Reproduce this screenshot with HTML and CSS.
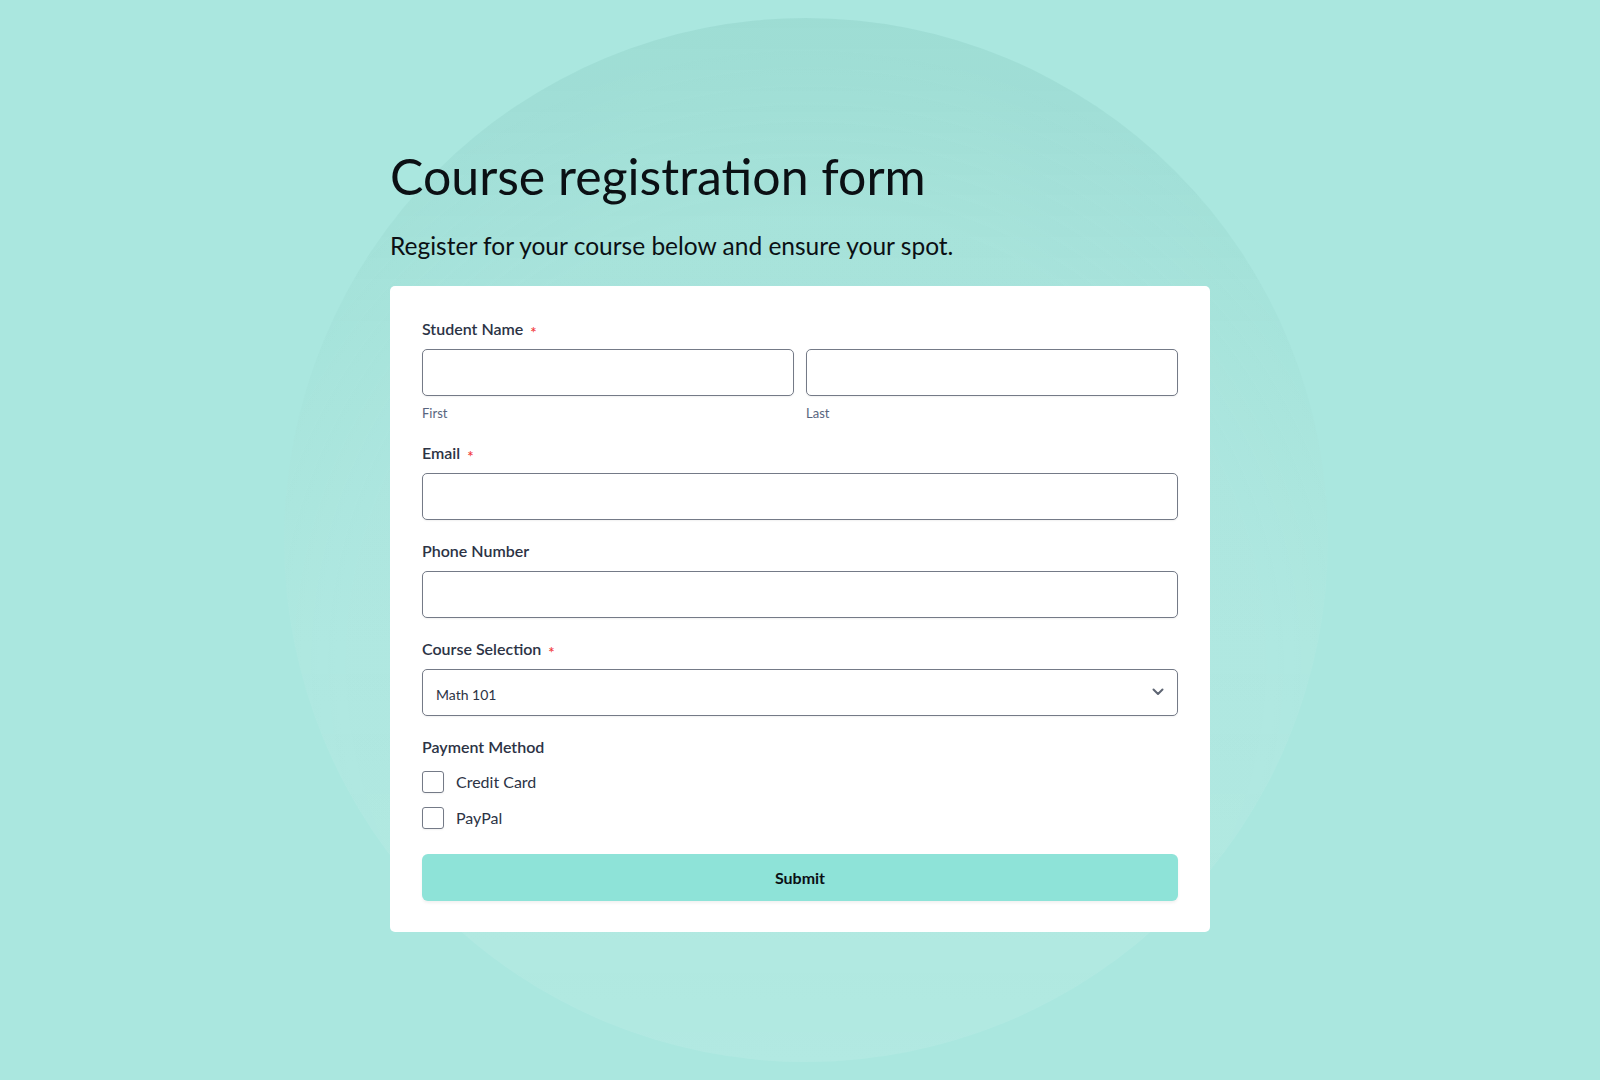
FILE: index.html
```html
<!DOCTYPE html>
<html lang="en">
<head>
<meta charset="utf-8">
<title>Course registration form</title>
<link rel="stylesheet" href="styles.css">
</head>
<body>
<div class="page">
  <div class="wrap">
    <h1 class="title">Course registration form</h1>
    <p class="subtitle">Register for your course below and ensure your spot.</p>
    <form class="card">
      <div class="field">
        <label class="label">Student Name <span class="req">*</span></label>
        <div class="name-row">
          <div class="name-col">
            <input class="input" type="text">
            <span class="sublabel">First</span>
          </div>
          <div class="name-col">
            <input class="input" type="text">
            <span class="sublabel">Last</span>
          </div>
        </div>
      </div>
      <div class="field">
        <label class="label">Email <span class="req">*</span></label>
        <input class="input" type="email">
      </div>
      <div class="field">
        <label class="label">Phone Number</label>
        <input class="input" type="tel">
      </div>
      <div class="field">
        <label class="label">Course Selection <span class="req">*</span></label>
        <div class="select">
          <span class="select-value">Math 101</span>
          <svg class="chevron" width="12" height="8" viewBox="0 0 12 8"><path d="M1.5 1.5 L6 6 L10.5 1.5" fill="none" stroke="#5e6573" stroke-width="2" stroke-linecap="round" stroke-linejoin="round"/></svg>
        </div>
      </div>
      <div class="field">
        <span class="label">Payment Method</span>
        <div class="options">
          <label class="option"><span class="box"></span>Credit Card</label>
          <label class="option"><span class="box"></span>PayPal</label>
        </div>
      </div>
      <button class="submit" type="button">Submit</button>
    </form>
  </div>
</div>
</body>
</html>
```

FILE: styles.css
```css
html, body {
  margin: 0;
  padding: 0;
}

body {
  background: #aae7df;
  font-family: Lato, "Noto Sans", sans-serif;
  color: #2c3345;
  min-height: 1080px;
  overflow: hidden;
  position: relative;
}

body::before {
  content: "";
  position: absolute;
  left: 284px;
  top: 18px;
  width: 1044px;
  height: 1044px;
  border-radius: 50%;
  background:
    radial-gradient(circle at 50% 62%, rgba(255,255,255,0.04) 0 55%, rgba(0,0,0,0) 75%),
    linear-gradient(to bottom, rgba(40,120,110,0.09) 0%, rgba(40,120,110,0.03) 30%, rgba(255,255,255,0.03) 60%, rgba(255,255,255,0.06) 100%);
  z-index: 0;
}

.page {
  position: relative;
  z-index: 1;
  display: flex;
  justify-content: center;
  padding-top: 146px;
}

.wrap {
  width: 820px;
}

.title {
  margin: 0;
  font-family: Lato, sans-serif;
  font-weight: 400;
  font-size: 50px;
  line-height: 60px;
  color: #0b1014;
  letter-spacing: 0;
}

.subtitle {
  margin: 25px 0 25px;
  font-size: 24.5px;
  line-height: 30px;
  color: #0b1014;
}

.card {
  background: #ffffff;
  border-radius: 5px;
  padding: 32px 32px 31px;
  display: flex;
  flex-direction: column;
  gap: 20px;
}

.field {
  display: flex;
  flex-direction: column;
}

.label {
  font-size: 16px;
  line-height: 22px;
  font-weight: 600;
  color: #2c3345;
  margin-bottom: 9px;
}

.req {
  color: #f23a3c;
  font-size: 15px;
  line-height: 0;
  margin-left: 3px;
  vertical-align: -3px;
}

.name-row {
  display: flex;
  gap: 12px;
}

.name-col {
  flex: 1;
  display: flex;
  flex-direction: column;
}

.input {
  box-sizing: border-box;
  width: 100%;
  height: 47px;
  border: 1px solid #747a87;
  border-radius: 5px;
  background: #fff;
  box-shadow: 0 1px 2px rgba(0,0,0,0.06);
  margin: 0;
  padding: 0 12px;
  font-family: Lato, sans-serif;
  font-size: 15px;
  outline: none;
}

.sublabel {
  margin-top: 8px;
  font-size: 13px;
  line-height: 18px;
  color: #57647e;
}

.select {
  box-sizing: border-box;
  height: 47px;
  border: 1px solid #747a87;
  border-radius: 5px;
  box-shadow: 0 1px 2px rgba(0,0,0,0.06);
  display: flex;
  align-items: center;
  justify-content: space-between;
  padding: 0 13px 0 13px;
}

.select-value {
  font-size: 14px;
  color: #2c3345;
  padding-top: 3px;
}

.chevron {
  display: block;
  margin-top: -1px;
}

.options {
  margin-top: 4px;
  display: flex;
  flex-direction: column;
  gap: 14px;
}

.option {
  display: flex;
  align-items: center;
  gap: 12px;
  font-size: 16px;
  line-height: 22px;
  color: #2c3345;
}

.box {
  box-sizing: border-box;
  width: 22px;
  height: 22px;
  border: 1px solid #747a87;
  border-radius: 3px;
  background: #fff;
  box-shadow: 0 1px 2px rgba(0,0,0,0.06);
}

.submit {
  margin-top: 5px;
  height: 47px;
  border: none;
  border-radius: 6px;
  background: #8ee3d8;
  box-shadow: 0 2px 3px rgba(0,0,0,0.06);
  font-family: Lato, sans-serif;
  font-size: 16px;
  font-weight: 700;
  color: #0b1014;
  cursor: pointer;
}
```
